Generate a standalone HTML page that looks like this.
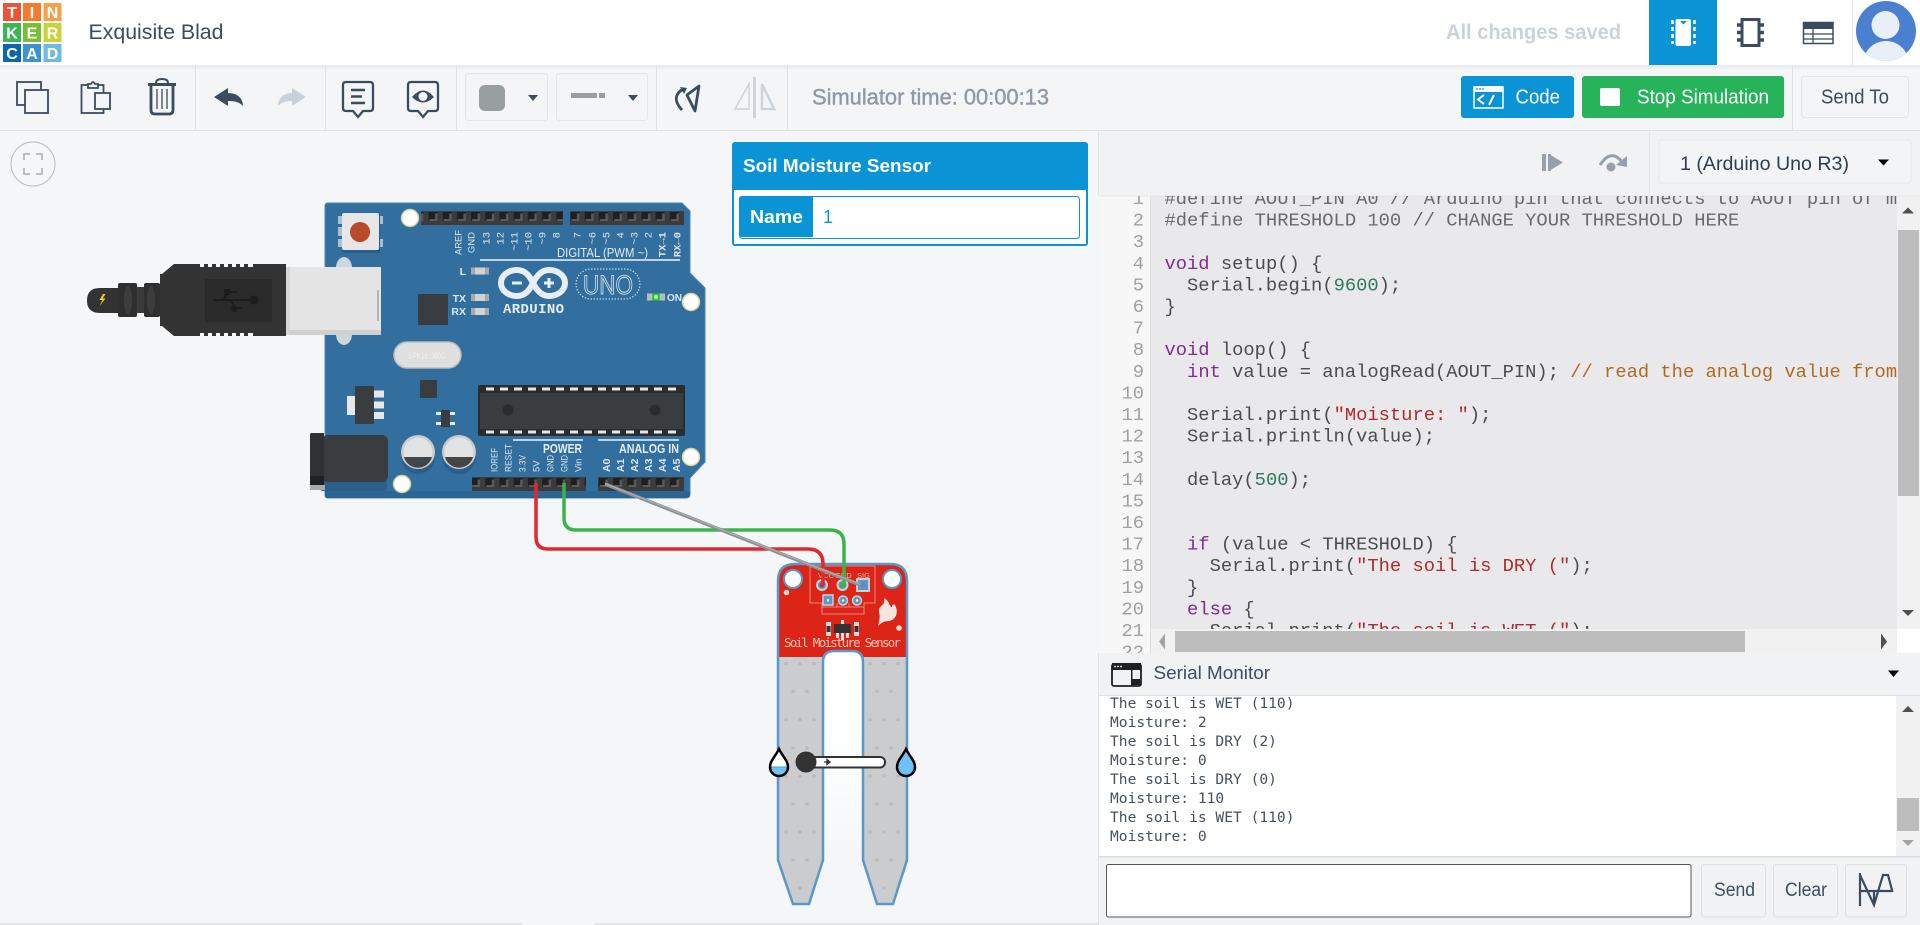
<!DOCTYPE html>
<html lang="en"><head><meta charset="utf-8"><title>Exquisite Blad</title>
<style>
html,body{margin:0;padding:0;background:#f4f6f8;overflow:hidden}
svg{display:block}
text{font-family:"Liberation Sans",sans-serif;white-space:pre}
.c text{font-family:"Liberation Mono",monospace;font-size:18.8px;fill:#4c4c4c}
.n text{font-family:"Liberation Mono",monospace;font-size:18.8px;fill:#a0a0a0;text-anchor:end}
.o text{font-family:"DejaVu Sans Mono",monospace;font-size:14.6px;fill:#46505e}
.lbl text{font-size:9.5px;fill:#dbe6ef}
.m text{font-family:"Liberation Mono",monospace;font-size:10.5px;fill:#dbe6ef}
.i{fill:none;stroke:#3c4c60;stroke-width:2}
</style></head><body>
<svg xmlns="http://www.w3.org/2000/svg" width="1920" height="925" viewBox="0 0 1920 925">
<defs>
<pattern id="pin" x="0" y="0" width="14.2" height="14" patternUnits="userSpaceOnUse"><rect width="14.2" height="14" fill="#3c3c3c"/><rect x="2.5" y="2" width="9" height="9" fill="#1f1f1f"/><path d="M9 3.5h2.5v7.5h-8v-2h5.500z" fill="#5a5a5a"/></pattern>
<linearGradient id="gap" x1="0" y1="0" x2="0" y2="1"><stop offset="0" stop-color="#fff"/><stop offset=".55" stop-color="#fcfdfd"/><stop offset="1" stop-color="#f4f6f8"/></linearGradient>
<clipPath id="cc"><rect x="1150" y="196" width="747" height="433"/></clipPath>
<clipPath id="gc"><rect x="1098" y="196" width="52" height="457"/></clipPath>
<clipPath id="av"><circle cx="1886" cy="31" r="30"/></clipPath>
<clipPath id="oc"><rect x="1099" y="696" width="797" height="160"/></clipPath>
</defs>

<rect width="1920" height="925" fill="#f4f6f8"/>

<!-- ===== canvas ===== -->
<circle cx="33" cy="164" r="22" fill="none" stroke="#b9bcc0" stroke-width="1"/>
<path d="M24 160v-6h6M36 154h6v6M42 168v6h-6M30 174h-6v-6" fill="none" stroke="#b3b7bc" stroke-width="1.800"/>

<!-- USB cable -->
<path d="M118 288H100Q87 288 87 300.500Q87 313 100 313H118Z" fill="#333"/>
<path d="M103 294l-3.500 6h3l-3 6 6-7.500h-3l3-4.500z" fill="#f2d31b"/>
<rect x="118" y="283" width="19" height="34" rx="2" fill="#2f2f2f"/>
<rect x="137" y="287" width="7" height="26" fill="#3b3b3b"/>
<rect x="144" y="283" width="16" height="34" rx="2" fill="#2f2f2f"/>
<ellipse cx="128" cy="300" rx="4" ry="14" fill="#3d3d3d"/><ellipse cx="151" cy="300" rx="4" ry="14" fill="#3d3d3d"/>
<path d="M286 264V336H174L162 326H160V274H162L174 264Z" fill="#333"/>
<path d="M200 264h4v3h-4zM208 264h4v3h-4zM216 264h4v3h-4zM224 264h4v3h-4zM232 264h4v3h-4zM240 264h4v3h-4zM248 264h5v3h-5zM200 333h4v3h-4zM208 333h4v3h-4zM216 333h4v3h-4zM224 333h4v3h-4zM232 333h4v3h-4zM240 333h4v3h-4zM248 333h5v3h-5z" fill="#f4f6f8"/>
<rect x="205" y="279" width="67" height="43" fill="#2a2a2a"/>
<path d="M213 300H253M223 300l6-8h8M230 300l6 8h6" fill="none" stroke="#1c1c1c" stroke-width="2"/>
<circle cx="254" cy="300" r="4.500" fill="#1c1c1c"/><rect x="224" y="289" width="6" height="6" fill="#1c1c1c"/><circle cx="234" cy="309" r="3" fill="#1c1c1c"/>

<!-- Arduino board -->
<path d="M325 206Q325 203 328 203H682L690 211V273L705 288V462L690 478V494Q690 498 686 498H328Q325 498 325 495Z" fill="#326f9f" stroke="#4c87b4" stroke-width="1"/>
<path d="M325 495Q325 498 328 498H686Q690 498 690 494V491H325Z" fill="#2b6593"/>

<ellipse cx="344" cy="268" rx="8" ry="11" fill="#ccd6dd"/><ellipse cx="344" cy="334" rx="8" ry="11" fill="#ccd6dd"/>
<rect x="289" y="267" width="92" height="68" fill="#e4e4e4"/><rect x="289" y="330" width="92" height="5" fill="#d0d0d0"/><rect x="286" y="267" width="4" height="68" fill="#d6d6d6"/>
<rect x="377" y="290" width="2" height="31" fill="#b5b5b5"/>

<rect x="342" y="216" width="38" height="37" rx="2" fill="#285d87"/>
<rect x="338" y="216" width="4" height="8" fill="#aebfcc"/><rect x="338" y="227" width="4" height="9" fill="#aebfcc"/><rect x="338" y="239" width="4" height="8" fill="#aebfcc"/>
<rect x="380" y="216" width="3" height="8" fill="#aebfcc"/><rect x="380" y="239" width="3" height="8" fill="#aebfcc"/>
<rect x="342" y="213" width="37" height="37" rx="2" fill="#e7e7e7"/>
<circle cx="360" cy="232" r="10" fill="#b84a2a"/>

<circle cx="410" cy="218" r="8.500" fill="#fff" stroke="#d8d29a" stroke-width="1.500"/>
<circle cx="691" cy="302" r="8.500" fill="#fff" stroke="#d8d29a" stroke-width="1.500"/>
<circle cx="402" cy="484" r="8.500" fill="#fff" stroke="#d8d29a" stroke-width="1.500"/>
<circle cx="691" cy="457" r="8.500" fill="#fff" stroke="#d8d29a" stroke-width="1.500"/>

<rect x="421" y="211" width="142" height="14" fill="url(#pin)"/>
<rect x="570" y="211" width="114" height="14" fill="url(#pin)"/>
<rect x="472" y="477" width="114" height="14" fill="url(#pin)"/>
<rect x="598" y="477" width="86" height="14" fill="url(#pin)"/>

<g class="lbl" text-anchor="end">
<text transform="translate(461.500,230) rotate(-90)" textLength="25" lengthAdjust="spacingAndGlyphs">AREF</text>
<text transform="translate(474.500,232) rotate(-90)">GND</text>
</g>
<g class="m" text-anchor="end">
<text transform="translate(489.500,232) rotate(-90)">13</text>
<text transform="translate(503.500,232) rotate(-90)">12</text>
<text transform="translate(517.500,232) rotate(-90)">~11</text>
<text transform="translate(531.500,232) rotate(-90)">~10</text>
<text transform="translate(545.500,232) rotate(-90)">~9</text>
<text transform="translate(559.500,232) rotate(-90)">8</text>
<text transform="translate(580.500,232) rotate(-90)">7</text>
<text transform="translate(595.500,232) rotate(-90)">~6</text>
<text transform="translate(609.500,232) rotate(-90)">~5</text>
<text transform="translate(623.500,232) rotate(-90)">4</text>
<text transform="translate(637.500,232) rotate(-90)">~3</text>
<text transform="translate(651.500,232) rotate(-90)">2</text>
<text transform="translate(665.500,232) rotate(-90)" font-weight="bold">TX→1</text>
<text transform="translate(680.500,232) rotate(-90)" font-weight="bold">RX←0</text>
</g>
<text x="557" y="257" font-size="13" fill="#e2ebf2" textLength="91" lengthAdjust="spacingAndGlyphs">DIGITAL (PWM ~)</text>
<rect x="480" y="259" width="200" height="2" fill="#bcd3e3"/>

<text x="466" y="275" font-size="10.500" fill="#dbe6ef" text-anchor="end" font-weight="bold">L</text>
<text x="466" y="302" font-size="10.500" fill="#dbe6ef" text-anchor="end" font-weight="bold">TX</text>
<text x="466" y="315" font-size="10.500" fill="#dbe6ef" text-anchor="end" font-weight="bold">RX</text>
<g><rect x="471" y="267.500" width="18" height="7" fill="#d2d2d2"/><rect x="471" y="267.500" width="4" height="7" fill="#a9a9a9"/><rect x="485" y="267.500" width="4" height="7" fill="#a9a9a9"/>
<rect x="471" y="294" width="18" height="7" fill="#d2d2d2"/><rect x="471" y="294" width="4" height="7" fill="#a9a9a9"/><rect x="485" y="294" width="4" height="7" fill="#a9a9a9"/>
<rect x="471" y="308" width="18" height="7" fill="#d2d2d2"/><rect x="471" y="308" width="4" height="7" fill="#a9a9a9"/><rect x="485" y="308" width="4" height="7" fill="#a9a9a9"/></g>
<rect x="418" y="294" width="30" height="31" rx="1" fill="#3a3d40"/>

<!-- logo -->
<path d="M517 270C526 270 530 277 533 283C536 277 541 270 549 270C557 270 565 275 565 283C565 291 557 296 549 296C541 296 536 289 533 283C530 289 526 296 517 296C509 296 501 291 501 283C501 275 509 270 517 270Z" fill="none" stroke="#e8eef3" stroke-width="6"/>
<rect x="512" y="281.500" width="10" height="3" fill="#e8eef3"/><path d="M544 281.500h3.500v-3.500h3v3.500h3.500v3h-3.500v3.500h-3v-3.500h-3.500z" fill="#e8eef3"/>
<text x="503" y="313" font-size="14" font-weight="bold" fill="#e8eef3" textLength="61" lengthAdjust="spacing" style="font-family:'Liberation Mono',monospace">ARDUINO</text>
<rect x="576" y="269" width="64" height="30" rx="15" fill="none" stroke="#dce7ef" stroke-width="1" stroke-dasharray="1.500 1.500"/>
<text x="583" y="294" font-size="27" fill="none" stroke="#e8eef3" stroke-width=".800" textLength="50" lengthAdjust="spacingAndGlyphs">UNO</text>
<rect x="647" y="293.500" width="18" height="7" fill="#b9bcbe"/><rect x="652" y="293.500" width="8" height="7" fill="#2fc540"/><circle cx="656" cy="297" r="2" fill="#b6f5b6"/>
<text x="667" y="301" font-size="10" font-weight="bold" fill="#dbe6ef">ON</text>

<!-- crystal -->
<rect x="394" y="342" width="67" height="26" rx="13" fill="#dfdfdf" stroke="#bcbcbc" stroke-width="1.500"/>
<text x="427" y="359" font-size="9" text-anchor="middle" fill="#efefef" textLength="38" lengthAdjust="spacingAndGlyphs">SPK16.000G</text>

<!-- regulators -->
<rect x="347" y="396" width="9" height="19" fill="#e7e7e7"/>
<rect x="374" y="390.500" width="10" height="7" fill="#e7e7e7"/><rect x="374" y="401.500" width="10" height="7" fill="#e7e7e7"/><rect x="374" y="412" width="10" height="7" fill="#e7e7e7"/>
<rect x="355" y="386" width="19" height="38" rx="1" fill="#3a3d40"/>
<rect x="420" y="380" width="17" height="18" rx="1" fill="#3a3d40"/>
<rect x="436" y="412" width="5" height="3" fill="#e7e7e7"/><rect x="436" y="422" width="5" height="3" fill="#e7e7e7"/><rect x="450" y="412" width="5" height="3" fill="#e7e7e7"/><rect x="450" y="422" width="5" height="3" fill="#e7e7e7"/>
<rect x="441" y="410" width="9" height="17" fill="#3a3d40"/>

<!-- ATmega -->
<rect x="478" y="385" width="207" height="51" rx="2" fill="#2a2c2e"/><rect x="480" y="393" width="203" height="36" fill="#3a3d40"/>
<g fill="#e6e6e6"><path d="M486 387.500h8v3h-8zM500 387.500h8v3h-8zM514 387.500h8v3h-8zM528 387.500h8v3h-8zM542 387.500h8v3h-8zM556 387.500h8v3h-8zM570 387.500h8v3h-8zM584 387.500h8v3h-8zM598 387.500h8v3h-8zM612 387.500h8v3h-8zM626 387.500h8v3h-8zM640 387.500h8v3h-8zM654 387.500h8v3h-8zM668 387.500h8v3h-8z"/>
<path d="M486 430.500h8v3h-8zM500 430.500h8v3h-8zM514 430.500h8v3h-8zM528 430.500h8v3h-8zM542 430.500h8v3h-8zM556 430.500h8v3h-8zM570 430.500h8v3h-8zM584 430.500h8v3h-8zM598 430.500h8v3h-8zM612 430.500h8v3h-8zM626 430.500h8v3h-8zM640 430.500h8v3h-8zM654 430.500h8v3h-8zM668 430.500h8v3h-8z"/></g>
<circle cx="508" cy="410" r="5.500" fill="#2a2d30"/><circle cx="655" cy="410" r="5.500" fill="#2a2d30"/>

<!-- caps -->
<circle cx="418" cy="457" r="17" fill="#2a5f8a"/><circle cx="459" cy="457" r="17" fill="#2a5f8a"/>
<circle cx="418" cy="452" r="17" fill="#c9cbcd"/><circle cx="459" cy="452" r="17" fill="#c9cbcd"/>
<circle cx="418" cy="452" r="14.500" fill="#e3e3e3"/><circle cx="459" cy="452" r="14.500" fill="#e3e3e3"/>
<path d="M404 457H432A14.500 14.500 0 0 1 404 457Z" fill="#434547"/><path d="M445 457H473A14.500 14.500 0 0 1 445 457Z" fill="#434547"/>

<!-- jack -->
<rect x="320" y="445" width="67" height="46" rx="3" fill="#2a5f8a"/>
<rect x="322" y="435" width="66" height="47" rx="6" fill="#3a3d40"/>
<rect x="310" y="485" width="15" height="5" fill="#aaa"/>
<path d="M311 433h13v52h-14v-51z" fill="#2f3235"/>
<rect x="310" y="476" width="14" height="9" fill="#1f2123"/>

<g class="lbl">
<text transform="translate(497.500,472) rotate(-90)" textLength="24" lengthAdjust="spacingAndGlyphs">IOREF</text>
<text transform="translate(511.500,472) rotate(-90)" textLength="28" lengthAdjust="spacingAndGlyphs">RESET</text>
<text transform="translate(525.500,472) rotate(-90)" textLength="17" lengthAdjust="spacingAndGlyphs">3.3V</text>
<text transform="translate(539.500,472) rotate(-90)">5V</text>
<text transform="translate(553.500,472) rotate(-90)" textLength="17" lengthAdjust="spacingAndGlyphs">GND</text>
<text transform="translate(567.500,472) rotate(-90)" textLength="17" lengthAdjust="spacingAndGlyphs">GND</text>
<text transform="translate(581.500,472) rotate(-90)">Vin</text>
<text transform="translate(610,472) rotate(-90)" style="font-size:10.5px" font-weight="bold">A0</text>
<text transform="translate(624,472) rotate(-90)" style="font-size:10.5px" font-weight="bold">A1</text>
<text transform="translate(638,472) rotate(-90)" style="font-size:10.5px" font-weight="bold">A2</text>
<text transform="translate(652,472) rotate(-90)" style="font-size:10.5px" font-weight="bold">A3</text>
<text transform="translate(666,472) rotate(-90)" style="font-size:10.5px" font-weight="bold">A4</text>
<text transform="translate(680,472) rotate(-90)" style="font-size:10.5px" font-weight="bold">A5</text>
</g>
<rect x="513" y="439" width="70" height="2" fill="#bcd3e3"/><rect x="598" y="439" width="81" height="2" fill="#bcd3e3"/>
<text x="582" y="453" font-size="12.500" fill="#e4edf3" text-anchor="end" font-weight="bold" textLength="39" lengthAdjust="spacingAndGlyphs">POWER</text>
<text x="679" y="453" font-size="12.500" fill="#e4edf3" text-anchor="end" font-weight="bold" textLength="60" lengthAdjust="spacingAndGlyphs">ANALOG IN</text>

<!-- sensor -->
<rect x="823" y="651" width="40" height="209" fill="url(#gap)"/>
<path d="M778 657V581Q778 564 795 564H890Q907 564 907 581V860L893 904H877L863 860V662Q863 651 852 651H834Q823 651 823 662V860L809 904H793L778 860Z" fill="#cbcccd"/>
<path d="M778 657V581Q778 564 795 564H890Q907 564 907 581V657H863Q863 651 852 651H834Q823 651 823 657Z" fill="#dc2417"/>
<path d="M778 657V581Q778 564 795 564H890Q907 564 907 581V860L893 904H877L863 860V662Q863 651 852 651H834Q823 651 823 662V860L809 904H793L778 860Z" fill="none" stroke="#5b97cb" stroke-width="2.500"/>
<g fill="#b9babb">
<circle cx="786" cy="663.500" r="1.800"/><circle cx="800" cy="663.500" r="1.800"/><circle cx="814" cy="663.500" r="1.800"/><circle cx="870" cy="663.500" r="1.800"/><circle cx="884" cy="663.500" r="1.800"/><circle cx="898" cy="663.500" r="1.800"/>
<circle cx="793" cy="691.500" r="1.800"/><circle cx="807" cy="691.500" r="1.800"/><circle cx="877" cy="691.500" r="1.800"/><circle cx="891" cy="691.500" r="1.800"/>
<circle cx="786" cy="719.500" r="1.800"/><circle cx="800" cy="719.500" r="1.800"/><circle cx="814" cy="719.500" r="1.800"/><circle cx="870" cy="719.500" r="1.800"/><circle cx="884" cy="719.500" r="1.800"/><circle cx="898" cy="719.500" r="1.800"/>
<circle cx="793" cy="748" r="1.800"/><circle cx="807" cy="748" r="1.800"/><circle cx="877" cy="748" r="1.800"/><circle cx="891" cy="748" r="1.800"/>
<circle cx="786" cy="776" r="1.800"/><circle cx="800" cy="776" r="1.800"/><circle cx="814" cy="776" r="1.800"/><circle cx="870" cy="776" r="1.800"/><circle cx="884" cy="776" r="1.800"/><circle cx="898" cy="776" r="1.800"/>
<circle cx="793" cy="804" r="1.800"/><circle cx="807" cy="804" r="1.800"/><circle cx="877" cy="804" r="1.800"/><circle cx="891" cy="804" r="1.800"/>
<circle cx="786" cy="832" r="1.800"/><circle cx="800" cy="832" r="1.800"/><circle cx="814" cy="832" r="1.800"/><circle cx="870" cy="832" r="1.800"/><circle cx="884" cy="832" r="1.800"/><circle cx="898" cy="832" r="1.800"/>
<circle cx="793" cy="860" r="1.800"/><circle cx="807" cy="860" r="1.800"/><circle cx="877" cy="860" r="1.800"/><circle cx="891" cy="860" r="1.800"/>
<circle cx="800" cy="888" r="1.800"/><circle cx="884" cy="888" r="1.800"/>
</g>
<circle cx="793" cy="579" r="9" fill="#fff" stroke="#5b97cb" stroke-width="2"/><circle cx="892" cy="579" r="9" fill="#fff" stroke="#5b97cb" stroke-width="2"/>
<circle cx="786.500" cy="592.500" r="2.800" fill="#f1d9d2"/><circle cx="899" cy="628" r="2.800" fill="#f1d9d2"/>
<path d="M810 566V603H822V614H864V603H875V566M810 566H875M822 607H864M837 607V603M849 607V603" fill="none" stroke="#eda79b" stroke-width=".800"/>
<text x="818" y="578" font-size="7.500" fill="#f4b9ac">VCC</text><text x="835" y="578" font-size="7.500" fill="#f4b9ac">GND</text><text x="857" y="578" font-size="7.500" fill="#f4b9ac">SIG</text>
<circle cx="822" cy="585" r="5" fill="#5b97cb" stroke="#ccd0d4" stroke-width="2"/><circle cx="842.500" cy="585" r="5" fill="#5b97cb" stroke="#ccd0d4" stroke-width="2"/>
<rect x="857" y="579" width="12" height="12" fill="#5b97cb" stroke="#ccd0d4" stroke-width="2"/>
<rect x="823" y="595" width="10" height="10" fill="#5b97cb" stroke="#ccd0d4" stroke-width="1.500"/><circle cx="843" cy="600.500" r="4.500" fill="#5b97cb" stroke="#ccd0d4" stroke-width="1.500"/><circle cx="857" cy="600.500" r="4.500" fill="#5b97cb" stroke="#ccd0d4" stroke-width="1.500"/>
<circle cx="828" cy="600.500" r="1.200" fill="#fff"/><circle cx="843" cy="600.500" r="1.200" fill="#fff"/><circle cx="857" cy="600.500" r="1.200" fill="#fff"/>
<rect x="826" y="622" width="5" height="14" fill="#d8d8d8"/><rect x="826.500" y="626" width="4" height="6" fill="#333"/><rect x="854" y="622" width="5" height="14" fill="#d8d8d8"/><rect x="854.500" y="626" width="4" height="6" fill="#333"/>
<rect x="841" y="620" width="3" height="20" fill="#ddd"/><rect x="836" y="630" width="3" height="8" fill="#ddd"/><rect x="846" y="630" width="3" height="8" fill="#ddd"/>
<rect x="834" y="624" width="17" height="9" fill="#333"/>
<path d="M878 626C880 619 880 616 879 612C878 605 886 606 884 598C891 602 888 606 892 607C892 604 894 604 895 605C899 612 896 620 889 621C884 621 881 623 878 626Z" fill="#f5e4df"/>
<text x="784" y="647" font-size="12.500" fill="#f8c5b9" textLength="117" lengthAdjust="spacing" style="font-family:'DejaVu Sans Mono',monospace">Soil Moisture Sensor</text>

<!-- wires -->
<path d="M536 483V537Q536 549 548 549H808Q823 549 823 564V585" fill="none" stroke="#e0282e" stroke-width="3.500"/>
<path d="M564 483V518Q564 530 576 530H830Q844 530 844 544V585" fill="none" stroke="#3ab54a" stroke-width="3.500"/>
<path d="M605 484L863 586" fill="none" stroke="#8e9194" stroke-width="3.500"/>
<path d="M605 483.500L863 585.500" fill="none" stroke="#b5b7b9" stroke-width=".800"/>
<circle cx="822" cy="585" r="2.500" fill="#c9303a"/><circle cx="843" cy="585" r="3" fill="#3ab54a"/><circle cx="863" cy="585.500" r="3" fill="#5b8fbd"/>

<!-- slider -->
<rect x="797" y="757" width="88" height="10.500" rx="5" fill="#fff" stroke="#333" stroke-width="2"/>
<path d="M824 762h5M827 759.500l3 2.500-3 2.500z" stroke="#333" stroke-width="1.300" fill="#333"/>
<circle cx="806" cy="762" r="10.500" fill="#333"/>
<path d="M779 749C775 757 770 761 770 767C770 772 774 776 779 776C784 776 788 772 788 767C788 761 783 757 779 749Z" fill="#fff"/>
<path d="M770 767H788C788 772 784 776 779 776C774 776 770 772 770 767Z" fill="#6fc1f6"/>
<path d="M770 767H788" stroke="#5a9bc5" stroke-width="1"/>
<path d="M779 749C775 757 770 761 770 767C770 772 774 776 779 776C784 776 788 772 788 767C788 761 783 757 779 749Z" fill="none" stroke="#000" stroke-width="2.500"/>
<path d="M906 749C902 757 897 761 897 767C897 772 901 776 906 776C911 776 915 772 915 767C915 761 910 757 906 749Z" fill="#6fc1f6" stroke="#000" stroke-width="2.500"/>

<rect x="0" y="923" width="1099" height="2" fill="#e3e5e8"/><rect x="522" y="923" width="72" height="2" fill="#f7f8f9"/>

<!-- ===== top bar ===== -->
<rect x="0" y="65" width="1920" height="65" fill="#f3f5f7"/>
<rect x="0" y="130" width="1920" height="1" fill="#dfe2e6"/>
<rect x="0" y="65" width="1920" height="3" fill="#e9ebee"/>
<rect width="1920" height="65" fill="#fff"/>

<g font-weight="bold" font-size="16" fill="#fff" text-anchor="middle">
<rect x="3" y="3" width="18" height="18" fill="#ed5435"/><text x="12" y="17.800">T</text>
<rect x="23" y="3" width="18" height="18" fill="#f27c2c"/><text x="32" y="17.800">I</text>
<rect x="43.500" y="3" width="18" height="18" fill="#f6a04c"/><text x="52.500" y="17.800">N</text>
<rect x="3" y="23" width="18" height="19" fill="#3cb554"/><text x="12" y="38.300">K</text>
<rect x="23" y="23" width="18" height="19" fill="#79be34"/><text x="32" y="38.300">E</text>
<rect x="43.500" y="23" width="18" height="19" fill="#c9d33a"/><text x="52.500" y="38.300">R</text>
<rect x="3" y="44" width="18" height="18" fill="#0b67ad"/><text x="12" y="58.800">C</text>
<rect x="23" y="44" width="18" height="18" fill="#3d92d2"/><text x="32" y="58.800">A</text>
<rect x="43.500" y="44" width="18" height="18" fill="#72b9e0"/><text x="52.500" y="58.800">D</text>
</g>
<text x="88.500" y="39" font-size="21" fill="#3d4b5f" textLength="135" lengthAdjust="spacingAndGlyphs">Exquisite Blad</text>
<text x="1446" y="39" font-size="21" font-weight="bold" fill="#ccd2da" textLength="175" lengthAdjust="spacingAndGlyphs">All changes saved</text>

<rect x="1649" y="0" width="68" height="65" fill="#0a94d6"/>
<rect x="1675.500" y="19" width="15.500" height="27" rx="2" fill="#fff"/>
<path d="M1680 21h7l-3.500 3.500z" fill="#0a94d6"/>
<path d="M1672.500 20v4M1672.500 27v4M1672.500 34v4M1672.500 41v3M1694.500 20v4M1694.500 27v4M1694.500 34v4M1694.500 41v3" stroke="#fff" stroke-width="2.500"/>
<rect x="1742" y="19.500" width="17" height="26" fill="none" stroke="#3c4c60" stroke-width="3"/>
<path d="M1737 25h5M1737 32.500h5M1737 40h5M1759 25h5M1759 32.500h5M1759 40h5" fill="none" stroke="#3c4c60" stroke-width="3.500"/>
<rect x="1803.500" y="22.500" width="29.500" height="21" fill="none" stroke="#3c4c60" stroke-width="1.500"/>
<rect x="1803" y="22" width="30" height="7" fill="#3c4c60"/>
<path d="M1803 34h30M1803 39h30M1813 29v15" stroke="#3c4c60" stroke-width="1.300" fill="none"/>
<rect x="1852" y="0" width="1" height="65" fill="#e3e5e8"/>
<circle cx="1886" cy="31" r="30" fill="#4a80d0"/>
<g clip-path="url(#av)"><circle cx="1885.500" cy="25" r="14" fill="#e9eff8"/><ellipse cx="1886" cy="64" rx="23" ry="23" fill="#e9eff8"/></g>

<!-- toolbar dividers -->
<g fill="#e0e3e7"><rect x="195" y="65" width="1" height="65"/><rect x="325" y="65" width="1" height="65"/><rect x="456" y="65" width="1" height="65"/><rect x="656" y="65" width="1" height="65"/><rect x="787" y="65" width="1" height="65"/><rect x="1792" y="65" width="1" height="65"/></g>

<!-- toolbar icons -->
<rect x="17" y="82" width="24" height="23" fill="#f3f5f7" stroke="#3c4c60" stroke-width="1.800"/>
<rect x="25" y="90" width="23" height="23" fill="#f3f5f7" stroke="#3c4c60" stroke-width="1.800"/>
<rect x="81.500" y="85" width="22" height="28" fill="#f3f5f7" stroke="#3c4c60" stroke-width="1.800"/>
<path d="M88 88V84H91Q93 80 95 84H98V88Z" fill="#f3f5f7" stroke="#3c4c60" stroke-width="1.800"/>
<rect x="95" y="93" width="15" height="16" fill="#f3f5f7" stroke="#3c4c60" stroke-width="1.800"/>
<path d="M148 84.500H176" stroke="#3c4c60" stroke-width="3"/>
<path d="M156 83Q156 79 162 79Q168 79 168 83" fill="none" stroke="#3c4c60" stroke-width="2"/>
<path d="M151 86V110Q151 114 155 114H169Q173 114 173 110V86" fill="none" stroke="#3c4c60" stroke-width="2.800"/>
<path d="M157 89V109M162 89V109M167 89V109" stroke="#3c4c60" stroke-width="1.300"/>
<path d="M214 97L228 88V93C238 93 243 99 243 106C239 102 235 101 228 101V106Z" fill="#3c4c60"/>
<path d="M306 97L292 88V93C283 93 278 99 278 106C282 102 286 101 292 101V106Z" fill="#c8d0d9"/>
<path d="M346 82H370Q373 82 373 85V108Q373 111 370 111H363L358 117L353 111H346Q343 111 343 108V85Q343 82 346 82Z" fill="none" stroke="#3c4c60" stroke-width="2.300"/>
<path d="M351 90H365M351 96.500H362M351 103H365" stroke="#3c4c60" stroke-width="2.500"/>
<path d="M411 82H435Q438 82 438 85V108Q438 111 435 111H428L423 117L418 111H411Q408 111 408 108V85Q408 82 411 82Z" fill="none" stroke="#3c4c60" stroke-width="2.300"/>
<path d="M412 97Q423 84 434 97Q423 108 412 97Z" fill="#3c4c60"/><circle cx="423" cy="96.500" r="4.500" fill="#f3f5f7"/>

<rect x="465.500" y="73.500" width="82" height="47" rx="3" fill="#f3f5f7" stroke="#e3e6ea"/>
<rect x="479" y="85" width="26" height="26" rx="6" fill="#999ea1"/>
<path d="M528 95H538L533 101Z" fill="#3c4c60"/>
<rect x="556.500" y="73.500" width="91" height="47" rx="3" fill="#f3f5f7" stroke="#e3e6ea"/>
<rect x="571" y="93" width="26" height="5" fill="#999ea1"/><rect x="599" y="93" width="6" height="5" fill="#999ea1"/>
<path d="M628 95H638L633 101Z" fill="#3c4c60"/>

<path d="M699 86L687 95L695 111Z" fill="none" stroke="#3c4c60" stroke-width="2.800" stroke-linejoin="round"/>
<path d="M683 89Q670 97 682 110" fill="none" stroke="#3c4c60" stroke-width="2.800"/><path d="M680 87l7 1-3 6z" fill="#3c4c60"/>
<path d="M749 84V109H735Z" fill="none" stroke="#ccd3db" stroke-width="1.500"/>
<rect x="753" y="77" width="3" height="41" fill="#ccd3db"/>
<path d="M762 84V109H774Z" fill="none" stroke="#ccd3db" stroke-width="2.500"/>

<text x="812" y="104.500" font-size="22" fill="#8e98a6" stroke="#8e98a6" stroke-width=".400" textLength="237" lengthAdjust="spacingAndGlyphs">Simulator time: 00:00:13</text>

<rect x="1461" y="76" width="113" height="42" rx="3" fill="#0a94d6"/>
<rect x="1474" y="87" width="29" height="21" fill="none" stroke="#fff" stroke-width="1.500"/><rect x="1474" y="86" width="29" height="6" fill="#fff"/>
<circle cx="1477" cy="89" r=".900" fill="#0a94d6"/><circle cx="1480" cy="89" r=".900" fill="#0a94d6"/><circle cx="1483" cy="89" r=".900" fill="#0a94d6"/>
<path d="M1484 95L1478 99.500L1484 104M1494 95L1489 105" fill="none" stroke="#fff" stroke-width="2"/>
<text x="1515.500" y="103.500" font-size="20" fill="#fff" textLength="44.500" lengthAdjust="spacingAndGlyphs">Code</text>
<rect x="1582" y="76" width="202" height="42" rx="3" fill="#27b35a"/>
<rect x="1600" y="88" width="20" height="18" rx="2" fill="#fff"/>
<text x="1637" y="103.500" font-size="20" fill="#fff" textLength="132" lengthAdjust="spacingAndGlyphs">Stop Simulation</text>
<rect x="1801.500" y="76.500" width="107" height="41" rx="3" fill="#f3f5f7" stroke="#e3e6ea"/>
<text x="1821" y="103.500" font-size="20" fill="#3d4b5f" textLength="68" lengthAdjust="spacingAndGlyphs">Send To</text>

<!-- properties panel -->
<rect x="732" y="142" width="356" height="104" rx="3" fill="#0a94d6"/>
<rect x="734" y="190" width="352" height="54" fill="#fff"/>
<text x="743" y="172" font-size="18" font-weight="bold" fill="#fff" textLength="188" lengthAdjust="spacingAndGlyphs">Soil Moisture Sensor</text>
<rect x="739.500" y="196.500" width="340" height="42" rx="3" fill="#fff" stroke="#0a94d6"/>
<path d="M742 196H813V237H742Q739 237 739 234V199Q739 196 742 196Z" fill="#0a94d6"/>
<text x="750" y="223" font-size="18" font-weight="bold" fill="#fff" textLength="53" lengthAdjust="spacingAndGlyphs">Name</text>
<text x="823" y="223" font-size="18" fill="#0a94d6">1</text>

<!-- ===== right panel ===== -->
<rect x="1098" y="131" width="822" height="794" fill="#f1f2f4"/>
<rect x="1098" y="131" width="1" height="794" fill="#dfe2e6"/>
<rect x="1649" y="131" width="1" height="65" fill="#e3e5e8"/>
<rect x="1542" y="154" width="4" height="17" fill="#98a0ab"/><path d="M1549 154L1563 162.500L1549 171Z" fill="#98a0ab"/><rect x="1548" y="154" width="3" height="17" fill="#98a0ab"/>
<path d="M1600 165Q1611 148 1622 162" fill="none" stroke="#98a0ab" stroke-width="3"/><path d="M1627 156V167L1616 165Z" fill="#98a0ab"/><circle cx="1611" cy="167" r="4.500" fill="#98a0ab"/>
<rect x="1659" y="140" width="252" height="43" rx="3" fill="#f3f4f6" stroke="#e6e8eb"/>
<text x="1680" y="170" font-size="19" fill="#2c3e50" textLength="169" lengthAdjust="spacingAndGlyphs">1 (Arduino Uno R3)</text>
<path d="M1878 159.500H1889L1883.500 165.500Z" fill="#000"/>

<!-- code -->
<rect x="1098" y="196" width="52" height="457" fill="#f7f7f7"/>
<rect x="1150" y="196" width="1" height="457" fill="#dfdfdf"/>
<rect x="1151" y="196" width="746" height="433" fill="#e9e9eb"/>
<rect x="1897" y="196" width="23" height="457" fill="#f1f1f1"/>
<rect x="1098" y="195.500" width="822" height="1" fill="#e3e5e8"/>

<g class="n" clip-path="url(#gc)">
<text x="1144" y="204">1</text><text x="1144" y="225.600">2</text><text x="1144" y="247.200">3</text><text x="1144" y="268.800">4</text><text x="1144" y="290.400">5</text><text x="1144" y="312">6</text><text x="1144" y="333.600">7</text><text x="1144" y="355.200">8</text><text x="1144" y="376.800">9</text><text x="1144" y="398.400">10</text><text x="1144" y="420">11</text><text x="1144" y="441.600">12</text><text x="1144" y="463.200">13</text><text x="1144" y="484.800">14</text><text x="1144" y="506.400">15</text><text x="1144" y="528">16</text><text x="1144" y="549.600">17</text><text x="1144" y="571.200">18</text><text x="1144" y="592.800">19</text><text x="1144" y="614.400">20</text><text x="1144" y="636">21</text><text x="1144" y="657.600">22</text>
</g>
<g class="c" clip-path="url(#cc)">
<text x="1164.500" y="204" style="fill:#6a6a6a">#define AOUT_PIN A0 // Arduino pin that connects to AOUT pin of moisture sensor</text>
<text x="1164.500" y="225.600" style="fill:#6a6a6a">#define THRESHOLD 100 // CHANGE YOUR THRESHOLD HERE</text>
<text x="1164.500" y="268.800"><tspan fill="#842a96">void</tspan> setup() {</text>
<text x="1164.500" y="290.400">  Serial.begin(<tspan fill="#2f7a5a">9600</tspan>);</text>
<text x="1164.500" y="312">}</text>
<text x="1164.500" y="355.200"><tspan fill="#842a96">void</tspan> loop() {</text>
<text x="1164.500" y="376.800">  <tspan fill="#842a96">int</tspan> value = analogRead(AOUT_PIN); <tspan fill="#b06a20">// read the analog value from sensor</tspan></text>
<text x="1164.500" y="420">  Serial.print(<tspan fill="#b02a2a">"Moisture: "</tspan>);</text>
<text x="1164.500" y="441.600">  Serial.println(value);</text>
<text x="1164.500" y="484.800">  delay(<tspan fill="#2f7a5a">500</tspan>);</text>
<text x="1164.500" y="549.600">  <tspan fill="#842a96">if</tspan> (value &lt; THRESHOLD) {</text>
<text x="1164.500" y="571.200">    Serial.print(<tspan fill="#b02a2a">"The soil is DRY ("</tspan>);</text>
<text x="1164.500" y="592.800">  }</text>
<text x="1164.500" y="614.400">  <tspan fill="#842a96">else</tspan> {</text>
<text x="1164.500" y="636">    Serial.print(<tspan fill="#b02a2a">"The soil is WET ("</tspan>);</text>
</g>
<!-- scrollbars -->
<path d="M1902 213.500L1908 207.500L1914 213.500Z" fill="#505050"/>
<rect x="1898" y="230" width="21" height="266" fill="#bdbdbd"/>
<path d="M1902 610L1908 616L1914 610Z" fill="#505050"/>
<rect x="1151" y="629" width="746" height="24" fill="#f1f1f1"/>
<rect x="1897" y="629" width="23" height="24" fill="#fff"/>
<path d="M1165 633.500L1159 641.500L1165 649.500Z" fill="#a3a3a3"/>
<rect x="1175" y="631" width="570" height="21" fill="#bdbdbd"/>
<path d="M1881 633.500L1887 641.500L1881 649.500Z" fill="#505050"/>

<!-- serial monitor -->
<rect x="1099" y="653" width="821" height="43" fill="#f1f2f4"/>
<rect x="1099" y="695" width="821" height="1" fill="#dcdfe3"/>
<rect x="1112" y="664" width="29" height="22" rx="2" fill="none" stroke="#1d1f22" stroke-width="1.800"/>
<rect x="1112" y="663" width="29" height="7" fill="#1d1f22"/><rect x="1131" y="670" width="1.500" height="16" fill="#1d1f22"/><rect x="1132" y="679" width="8" height="6" fill="#1d1f22"/>
<circle cx="1115" cy="666.500" r=".900" fill="#fff"/><circle cx="1118" cy="666.500" r=".900" fill="#fff"/><circle cx="1121" cy="666.500" r=".900" fill="#fff"/>
<text x="1153.500" y="679" font-size="18" fill="#3d4d63" textLength="116.500" lengthAdjust="spacingAndGlyphs">Serial Monitor</text>
<path d="M1888 670.500H1899L1893.500 677Z" fill="#000"/>
<rect x="1099" y="696" width="797" height="160" fill="#fff"/>
<rect x="1896" y="696" width="24" height="160" fill="#f1f1f1"/>
<g class="o" clip-path="url(#oc)">
<text x="1110" y="708">The soil is WET (110)</text>
<text x="1110" y="727">Moisture: 2</text>
<text x="1110" y="746">The soil is DRY (2)</text>
<text x="1110" y="765">Moisture: 0</text>
<text x="1110" y="784">The soil is DRY (0)</text>
<text x="1110" y="803">Moisture: 110</text>
<text x="1110" y="822">The soil is WET (110)</text>
<text x="1110" y="841">Moisture: 0</text>
</g>
<path d="M1902 712L1908 706L1914 712Z" fill="#505050"/>
<rect x="1897" y="798" width="22" height="33" fill="#bdbdbd"/>
<path d="M1902 840L1908 846L1914 840Z" fill="#a3a3a3"/>
<rect x="1099" y="856" width="821" height="1.500" fill="#d8dbdf"/>
<rect x="1106.500" y="864.500" width="584.500" height="52.500" rx="2" fill="#fff" stroke="#555"/>
<rect x="1701.500" y="864.500" width="64" height="52.500" rx="3" fill="#f1f2f4" stroke="#dcdfe3"/>
<text x="1714" y="896" font-size="19" fill="#3d4d63" textLength="41" lengthAdjust="spacingAndGlyphs">Send</text>
<rect x="1773.500" y="864.500" width="64" height="52.500" rx="3" fill="#f1f2f4" stroke="#dcdfe3"/>
<text x="1785" y="896" font-size="19" fill="#3d4d63" textLength="42" lengthAdjust="spacingAndGlyphs">Clear</text>
<rect x="1845.500" y="864.500" width="61" height="52.500" rx="3" fill="#f1f2f4" stroke="#dcdfe3"/>
<path d="M1860 873V906M1860 875L1874 905L1883 875H1888L1892.500 892M1859 891H1892.500M1874 891V905" fill="none" stroke="#3c4c60" stroke-width="2.200"/>
</svg>
</body></html>
